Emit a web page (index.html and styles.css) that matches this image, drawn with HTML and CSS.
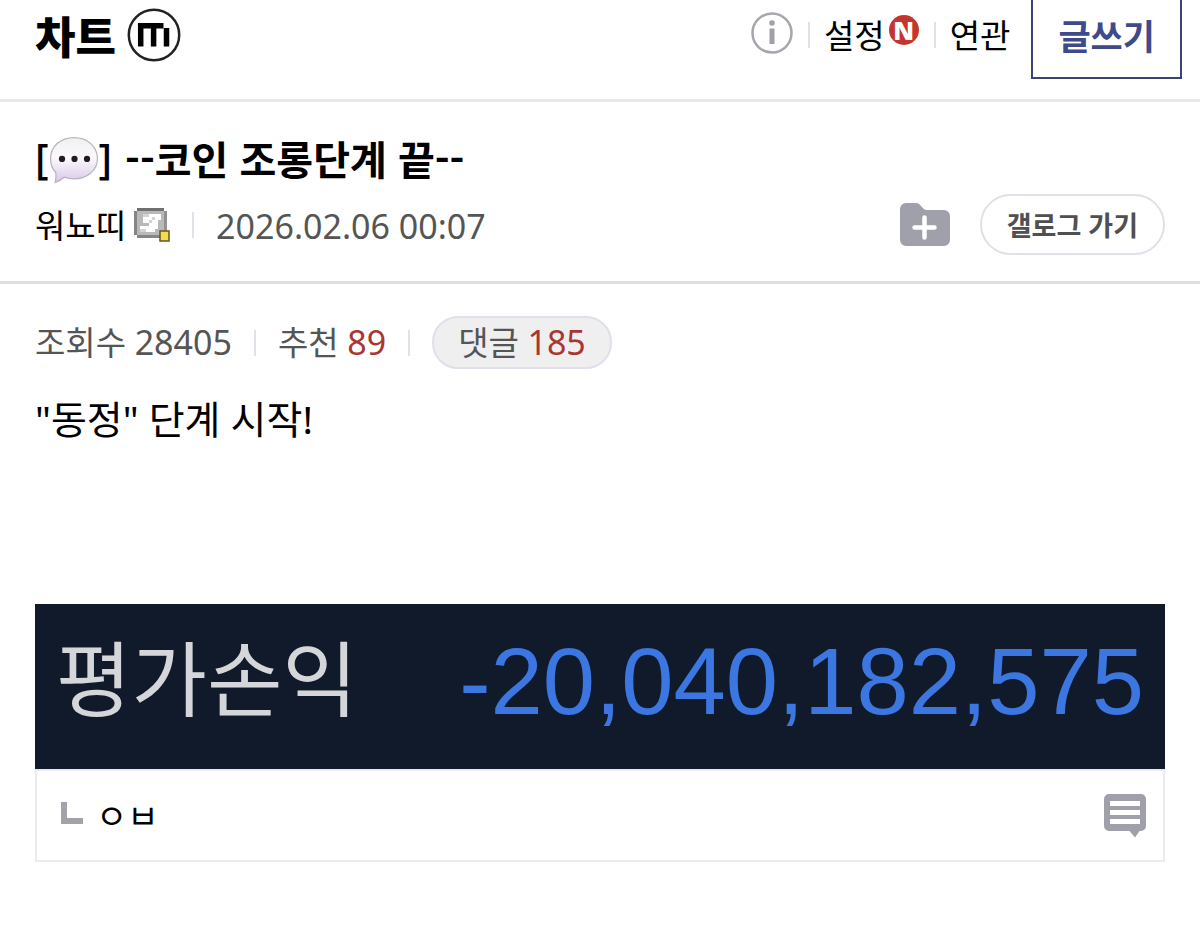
FILE: index.html
```html
<!DOCTYPE html>
<html lang="ko">
<head>
    <meta charset="UTF-8">
    <meta name="viewport" content="width=device-width, initial-scale=1">
    <title>차트 갤러리</title>
    <link rel="stylesheet" href="styles.css">
</head>
<body>

    <header class="gallery-header">
        <h1 class="logo">
            <a href="#">차트</a>
            <svg class="logo-mark" viewBox="0 0 54 54" aria-hidden="true">
                <circle cx="27" cy="27" r="25.2" fill="none" stroke="#222" stroke-width="2.5"/>
                <path d="M13.7 38.500V17.800H36.500M26.600 17V38.500M39.500 20V38.500" fill="none" stroke="#000" stroke-width="5.500"/>
            </svg>
        </h1>
        <nav class="gallery-menu">
            <button class="icon-btn info-btn" aria-label="갤러리 정보">
                <svg viewBox="0 0 42 42">
                    <circle cx="21" cy="21" r="19.5" fill="none" stroke="#a5a6ae" stroke-width="2.5"/>
                    <circle cx="21" cy="11" r="2.8" fill="#a0a1a8"/>
                    <path d="M18.500 16.500h5V32h-5z" fill="#a0a1a8"/>
                </svg>
            </button>
            <span class="bar"></span>
            <a href="#">설정</a>
            <span class="new">N</span>
            <span class="bar"></span>
            <a href="#">연관</a>
            <button class="write-btn">글쓰기</button>
        </nav>
    </header>

    <section class="post-head">
        <h2 class="post-title">
            <span class="bracket">[</span>
            <!-- speech bubble -->
            <svg class="bubble" viewBox="0 0 48 46" aria-hidden="true">
                <defs>
                    <linearGradient id="bubbleFill" x1="0" y1="0" x2="0" y2="1">
                        <stop offset="0" stop-color="#f0f0f1"/>
                        <stop offset="0.45" stop-color="#fbf9fc"/>
                        <stop offset="1" stop-color="#d9c8e9"/>
                    </linearGradient>
                </defs>
                <path d="M24 1.500C11 1.500 1.500 10 1.500 21.500c0 6 1.500 10 5 13.500 .5 3 .2 6-.5 9.500 4-1.500 6.500-3 8.500-5 3 1.200 6 1.700 9.500 1.700 13 0 22.500-8.500 22.500-19.700S37 1.500 24 1.500z" fill="url(#bubbleFill)" stroke="#b9b5bd" stroke-width="1.200"/>
                <circle cx="12.500" cy="22" r="3" fill="#241c24"/>
                <circle cx="24.500" cy="22" r="3" fill="#241c24"/>
                <circle cx="36.500" cy="22" r="3" fill="#241c24"/>
            </svg>
            <span class="bracket">]</span>
            <span class="title-text">--코인 조롱단계 끝--</span>
        </h2>
        <div class="post-info">
            <span class="nick">워뇨띠</span>
            <!-- fixed nickname badge -->
            <svg class="nick-icon" viewBox="0 0 36 34" aria-hidden="true">
                <path d="M3 0h27v3h3v24h-3v3H3v-3H0V3h3z" fill="#929292"/>
                <path d="M3 0h27v3H3z" fill="#707070"/>
                <path d="M3 3h27v24H3z" fill="#b9b9b9"/>
                <path d="M0 3h3v24H0zM3 27h24v3H3z" fill="#858585"/>
                <path d="M15 6h12v6h-3v9h-3v3H9v-3H6v-3h9v-3H9V9h6z" fill="#fff"/>
                <path d="M9 6h6v3H9zM15 12h3v3h-3zM18 9h3v3h-3zM6 21h6v3H6z" fill="#d4d4d4"/>
                <path d="M26 23h9v10h-9z" fill="#f4dc51" stroke="#66551b" stroke-width="1.500"/>
            </svg>
            <span class="bar"></span>
            <span class="date">2026.02.06 00:07</span>
            <div class="post-actions">
                <button class="icon-btn folder-btn" aria-label="보관하기">
                    <svg viewBox="0 0 50 44">
                        <path d="M6 0h10c5 0 6 7 11 7h17a6 6 0 0 1 6 6v24a6 6 0 0 1-6 6H6a6 6 0 0 1-6-6V6a6 6 0 0 1 6-6z" fill="#a0a0ab"/>
                        <path d="M24.500 14.500v20M14.500 24.500h20" stroke="#fff" stroke-width="4.500" stroke-linecap="round"/>
                    </svg>
                </button>
                <button class="gallog-btn">갤로그 가기</button>
            </div>
        </div>
    </section>

    <main class="post-body">
        <div class="stats">
            <span>조회수 <span class="num">28405</span></span>
            <span class="bar"></span>
            <span>추천 <span class="num red">89</span></span>
            <span class="bar"></span>
            <a href="#" class="comment-count">댓글 <span class="num red">185</span></a>
        </div>

        <p class="post-text">"동정" 단계 시작!</p>

        <div class="profit">
            <span class="profit-label">평가손익</span>
            <span class="profit-value">-20,040,182,575</span>
        </div>
        <div class="reply">
            <svg class="reply-corner" viewBox="0 0 22 22" aria-hidden="true">
                <path d="M3 0V19H22" fill="none" stroke="#a2a2aa" stroke-width="6"/>
            </svg>
            <span class="reply-text">ㅇㅂ</span>
            <button class="icon-btn reply-btn" aria-label="댓글 달기">
                <svg viewBox="0 0 42 44">
                    <path d="M5 0h32a5 5 0 0 1 5 5v27a5 5 0 0 1-5 5h-1.500L31 43.500 25.500 37H5a5 5 0 0 1-5-5V5a5 5 0 0 1 5-5z" fill="#a0a0ab"/>
                    <path d="M6 9.500h30M6 18.500h30M6 27.500h30" stroke="#fff" stroke-width="5"/>
                </svg>
            </button>
        </div>
    </main>

</body>
</html>
```

FILE: styles.css
```css
* {
    box-sizing: border-box;
}

body {
    margin: 0;
    background-color: #fff;
    color: #000;
    font-family: "Noto Sans", "Noto Sans CJK KR", sans-serif;
    font-size: 33px;
    line-height: 48px;
}

h1, h2, p {
    margin: 0;
}

a {
    color: inherit;
    text-decoration: none;
}

button {
    font-family: inherit;
    cursor: pointer;
}

svg {
    display: block;
    flex-shrink: 0;
}

.bar {
    width: 2px;
    height: 26px;
    background-color: #dfe2e8;
}

.icon-btn {
    padding: 0;
    border: none;
    background: none;
}

/* header */
.gallery-header {
    display: flex;
    justify-content: space-between;
    align-items: flex-start;
    height: 102px;
    padding: 0 18px 0 35px;
    border-bottom: 3px solid #e9e9eb;
}

.logo {
    display: flex;
    align-items: flex-start;
    gap: 11px;
    padding-top: 8px;
    font-size: 44px;
    font-weight: 900;
    line-height: 58px;
}

.logo-mark {
    width: 54px;
    height: 54px;
}

.gallery-menu {
    display: flex;
    align-items: flex-start;
}

.gallery-menu a {
    padding-top: 12px;
}

.gallery-menu .bar {
    margin: 22px 14px 0 15px;
}

.info-btn {
    width: 42px;
    margin-top: 12px;
}

.new {
    width: 30px;
    height: 30px;
    margin: 15px 0 0 4px;
    border-radius: 50%;
    background-color: #c5352f;
    color: #fff;
    font-size: 25px;
    font-weight: 900;
    line-height: 30px;
    text-align: center;
}

.write-btn {
    height: 79px;
    margin-left: 21px;
    padding: 0 25px 8px;
    border: 2px solid #3b4374;
    border-top: none;
    background-color: #fff;
    color: #3f4a8a;
    font-size: 35px;
    font-weight: 700;
}

/* title and writer */
.post-head {
    padding: 34px 35px 26px;
    border-bottom: 3px solid #dcdee3;
}

.post-title {
    display: flex;
    align-items: center;
    font-size: 40px;
    line-height: 48px;
}

.bracket {
    font-size: 41px;
    font-weight: 500;
    line-height: 44px;
    padding-bottom: 4px;
}

.bubble {
    width: 50px;
    height: 48px;
}

.title-text {
    margin-left: 13px;
    padding-bottom: 4px;
    line-height: 44px;
    font-family: "Noto Sans CJK KR", sans-serif;
}

.post-info {
    display: flex;
    align-items: center;
    margin-top: 10px;
}

.nick, .date {
    padding-top: 3px;
}

.nick-icon {
    width: 36px;
    height: 34px;
    margin-left: 8px;
}

.post-info .bar {
    margin: 0 22px;
}

.date {
    color: #555;
    font-size: 34px;
}

.post-actions {
    display: flex;
    align-items: center;
    gap: 30px;
    margin-left: auto;
}

.folder-btn {
    width: 50px;
}

.gallog-btn {
    height: 61px;
    padding: 0 25px;
    border: 2px solid #dfe0e8;
    border-radius: 31px;
    background-color: #fff;
    color: #505050;
    font-size: 27px;
    font-weight: 700;
}

/* content */
.post-body {
    padding: 32px 35px;
}

.stats {
    display: flex;
    align-items: center;
    color: #555;
}

.stats .bar {
    margin: 0 22px;
}

.num {
    font-size: 34px;
}

.red {
    color: #a93632;
}

.comment-count {
    padding: 0 24px;
    border: 2px solid #dfe1ea;
    border-radius: 26px;
    background-color: #efefef;
}

.post-text {
    margin: 25px 0 160px;
    font-size: 39px;
    line-height: 50px;
}

.profit {
    display: flex;
    justify-content: space-between;
    padding: 18px 21px 27px;
    background-color: #101a2a;
    line-height: 120px;
}

.profit-label {
    color: #d5d6d9;
    font-size: 82px;
    line-height: 112px;
}

.profit-value {
    color: #3b76e1;
    font-family: "Liberation Sans", Arial, sans-serif;
    font-size: 94px;
}

.reply {
    display: flex;
    align-items: center;
    padding: 21px 17px 20px 24px;
    border: 2px solid #eaebee;
}

.reply-corner {
    width: 22px;
    height: 22px;
    margin-bottom: 6px;
}

.reply-text {
    margin-left: 13px;
    font-size: 34px;
}

.reply-btn {
    width: 42px;
    margin-left: auto;
}
```
